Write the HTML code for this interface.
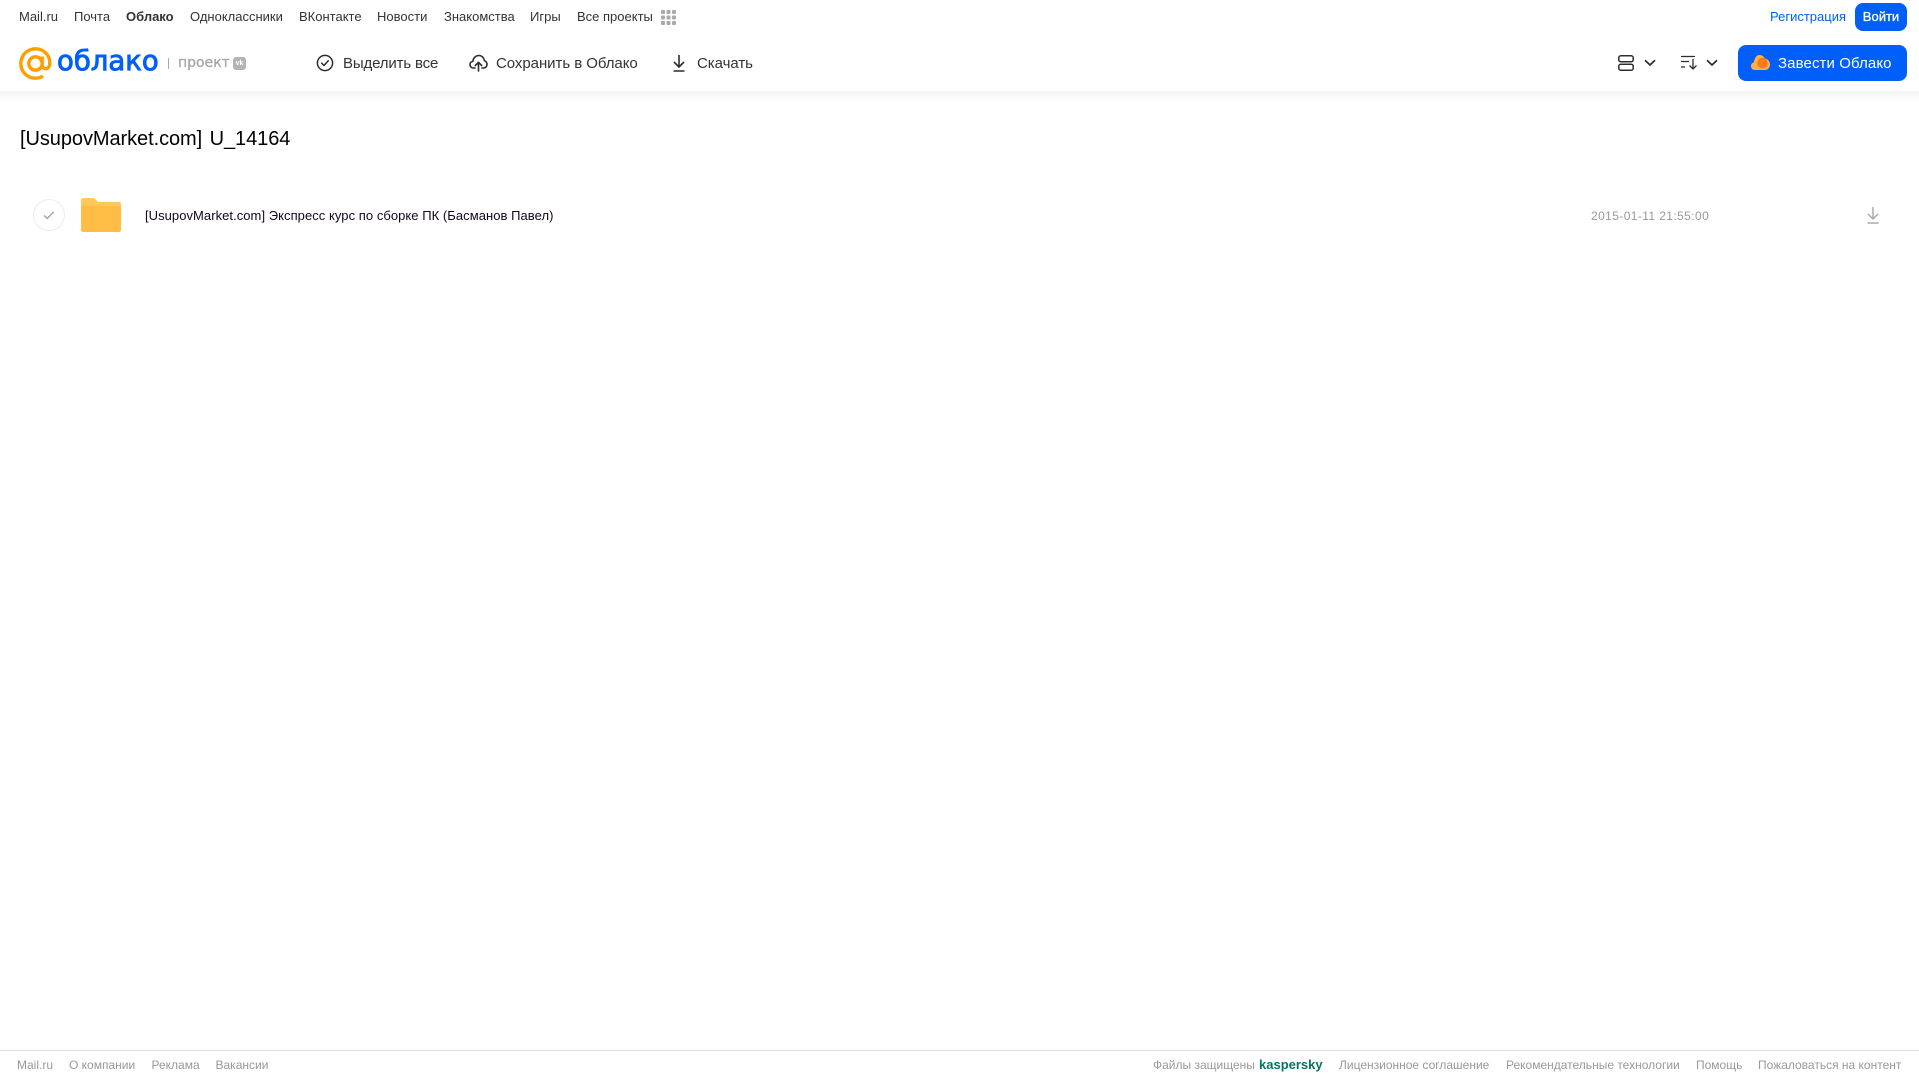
<!DOCTYPE html>
<html lang="ru"><head><meta charset="utf-8"><title>Облако</title>
<style>
html,body{margin:0;padding:0;background:#fff;width:1919px;height:1079px;overflow:hidden;font-family:"Liberation Sans",sans-serif}
.t{position:absolute;white-space:nowrap;line-height:20px}
.n{top:7px;font-size:13px;color:#333}
.b{top:53.500px;font-size:15px;color:#333;letter-spacing:-.05px}
.f{top:1055px;font-size:12px;color:#999}
svg{position:absolute;overflow:visible}
</style></head><body>
<div style="position:absolute;left:0;top:91px;width:1919px;height:12px;background:linear-gradient(#f3f3f3,#fff)"></div>
<span class="t n" style="left:19px">Mail.ru</span>
<span class="t n" style="left:74px">Почта</span>
<span class="t n" style="left:126px;font-weight:bold">Облако</span>
<span class="t n" style="left:190px">Одноклассники</span>
<span class="t n" style="left:299px">ВКонтакте</span>
<span class="t n" style="left:377px">Новости</span>
<span class="t n" style="left:444px">Знакомства</span>
<span class="t n" style="left:530px">Игры</span>
<span class="t n" style="left:577px">Все проекты</span>
<svg style="left:661px;top:10px" width="15" height="15" fill="#aaa"><rect width="4" height="4" rx="1"/><rect x="5.500" width="4" height="4" rx="1"/><rect x="11" width="4" height="4" rx="1"/><rect y="5.500" width="4" height="4" rx="1"/><rect x="5.500" y="5.500" width="4" height="4" rx="1"/><rect x="11" y="5.500" width="4" height="4" rx="1"/><rect y="11" width="4" height="4" rx="1"/><rect x="5.500" y="11" width="4" height="4" rx="1"/><rect x="11" y="11" width="4" height="4" rx="1"/></svg>
<span class="t n" style="left:1770px;color:#005ff9">Регистрация</span>
<div style="position:absolute;left:1855px;top:3px;width:52px;height:28px;background:#005ff9;border-radius:8px;color:#fff;font-size:13px;-webkit-text-stroke:.3px #fff;line-height:27px;text-align:center">Войти</div>

<svg style="left:19px;top:47px" width="33" height="33" viewBox="0 0 33 33" fill="none" stroke="#ff9e00" stroke-width="3.400"><circle cx="16.500" cy="16.500" r="6.700"/><path d="M23.200 9.500V18C23.200 20.500 25 21.800 26.700 21.800C29 21.800 30.800 19.500 30.800 16C30.800 7.800 24.500 1.800 16.500 1.800C8.300 1.800 1.800 8.300 1.800 16.500C1.800 24.700 8.300 31.200 16.500 31.200C19.500 31.200 21.800 30.500 24 29"/></svg>
<span class="t" style="left:57px;top:46px;font-family:'DejaVu Sans',sans-serif;font-size:27.500px;line-height:30px;color:#005ff9;-webkit-text-stroke:.9px #005ff9">облако</span>
<div style="position:absolute;left:168px;top:58px;width:1px;height:11px;background:#aaa"></div>
<span class="t" style="left:178px;top:53px;font-family:'DejaVu Sans',sans-serif;font-size:14px;color:#a6a6a6;-webkit-text-stroke:.3px #a6a6a6">проект</span>
<div style="position:absolute;left:233px;top:57px;width:13px;height:13px;border-radius:3px;background:#b3b3b3;color:#fff;font-size:7px;font-weight:bold;line-height:13px;text-align:center">vk</div>

<svg style="left:316px;top:54px" width="18" height="18" viewBox="0 0 18 18" fill="none" stroke="#2c2d2e" stroke-width="1.500"><circle cx="9" cy="9" r="7.600"/><path d="M5.700 9.200L8 11.500L12.300 6.800" stroke-linecap="round" stroke-linejoin="round"/></svg>
<span class="t b" style="left:343px;letter-spacing:-.15px">Выделить все</span>
<svg style="left:469px;top:54px" width="19" height="18" viewBox="0 0 19 18" fill="none" stroke="#2c2d2e" stroke-width="1.600" stroke-linecap="round" stroke-linejoin="round"><path d="M6 14H4.500C2.500 14 1 12.500 1 10.600C1 8.900 2.200 7.700 3.800 7.400C4.200 4 6.700 1.500 9.800 1.500C12.800 1.500 15 3.700 15.400 6.600C17 7.200 18 8.700 18 10.500C18 12.500 16.500 14 14.500 14H13"/><path d="M9.500 17V8.500M6.300 11.500L9.500 8.300L12.700 11.500"/></svg>
<span class="t b" style="left:496px">Сохранить в Облако</span>
<svg style="left:672px;top:54px" width="14" height="18" viewBox="0 0 14 18" fill="none" stroke="#2c2d2e" stroke-width="1.600"><path d="M7 1V12.500M2 8L7 13L12 8M1.500 17H12.500"/></svg>
<span class="t b" style="left:697px">Скачать</span>

<svg style="left:1618px;top:55px" width="16" height="16" viewBox="0 0 16 16" fill="none" stroke="#2c2d2e" stroke-width="1.500"><rect x=".8" y=".8" width="14.400" height="6" rx="2"/><rect x=".8" y="9.200" width="14.400" height="6" rx="2"/></svg>
<svg style="left:1644px;top:59px" width="12" height="8" fill="none" stroke="#2c2d2e" stroke-width="1.700"><path d="M1 1.200L6 6L11 1.200"/></svg>
<svg style="left:1681px;top:55px" width="17" height="15" fill="none" stroke="#2c2d2e" stroke-width="1.300"><path d="M0 1.500H14M0 6.500H8M0 12H4M12 4V14M8.500 10.500L12 14L15.500 10.500"/></svg>
<svg style="left:1706px;top:59px" width="12" height="8" fill="none" stroke="#2c2d2e" stroke-width="1.700"><path d="M1 1.200L6 6L11 1.200"/></svg>
<div style="position:absolute;left:1738px;top:45px;width:169px;height:36px;background:#005ff9;border-radius:8px"></div>
<svg style="left:1751px;top:55px" width="19" height="15" viewBox="0 0 19 15"><path d="M4 15C1.500 15 0 13.200 0 11C0 9 1.300 7.500 3 7.200C3.500 3 5.500 0 8.500 0C11 0 13 1.500 14 3.800C16.800 4 19 6.500 19 9.500C19 12.700 16.700 15 14 15Z" fill="#ffb13d"/><circle cx="11.500" cy="8.200" r="5.300" fill="#ff7a1f"/></svg>
<span class="t" style="left:1778px;top:53.500px;font-size:15px;color:#fff;letter-spacing:.1px">Завести Облако</span>

<span class="t" style="left:20px;top:126px;font-size:20px;line-height:26px;color:#000;word-spacing:2px;letter-spacing:-.07px">[UsupovMarket.com] U_14164</span>

<div style="position:absolute;left:33px;top:199px;width:30px;height:30px;border:1px solid #ececec;border-radius:50%"></div>
<svg style="left:43px;top:211px" width="12" height="9" fill="none" stroke="#a0a0a0" stroke-width="1.300"><path d="M1 4.500L4.300 7.500L10.500 1"/></svg>
<svg style="left:81px;top:198px" width="40" height="34" viewBox="0 0 41 35"><path d="M2 0H12C13.500 0 14.500 .7 15.500 2L17.500 4H39C40.200 4 41 4.800 41 6V33C41 34.200 40.200 35 39 35H2C.8 35 0 34.200 0 33V2C0 .8.800 0 2 0Z" fill="#ffc75c"/><path d="M0 8H41V33C41 34.200 40.200 35 39 35H2C.8 35 0 34.200 0 33Z" fill="#ffbd45"/></svg>
<span class="t" style="left:145px;top:206px;font-size:13px;color:#14051f;letter-spacing:.05px">[UsupovMarket.com] Экспресс курс по сборке ПК (Басманов Павел)</span>
<span class="t" style="left:1591px;top:206px;font-size:12px;color:#999;letter-spacing:.4px">2015-01-11 21:55:00</span>
<svg style="left:1866px;top:206px" width="14" height="18" viewBox="0 0 14 18" fill="none" stroke="#aaa" stroke-width="1.500"><path d="M7 1V12.500M2 8L7 13L12 8M1.500 17H12.500"/></svg>

<div style="position:absolute;left:0;top:1050px;width:1919px;height:1px;background:#ddd"></div>
<span class="t f" style="left:17px">Mail.ru</span>
<span class="t f" style="left:69px">О компании</span>
<span class="t f" style="left:151.500px">Реклама</span>
<span class="t f" style="left:215.500px">Вакансии</span>
<span class="t f" style="left:1153px">Файлы защищены</span>
<span class="t f" style="left:1259px;font-size:13px;color:#00785f;font-weight:bold">kaspersky</span>
<span class="t f" style="left:1339px">Лицензионное соглашение</span>
<span class="t f" style="left:1506px">Рекомендательные технологии</span>
<span class="t f" style="left:1696px">Помощь</span>
<span class="t f" style="left:1758px">Пожаловаться на контент</span>
</body></html>
